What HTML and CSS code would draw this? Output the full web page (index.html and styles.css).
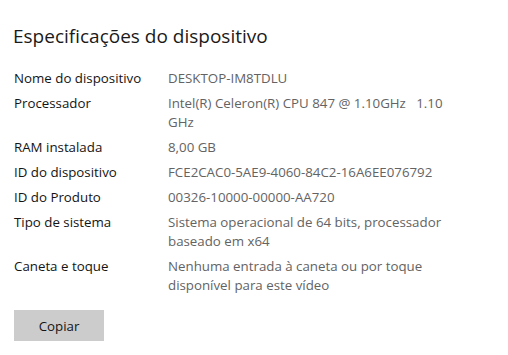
FILE: index.html
```html
<!DOCTYPE html>
<html lang="pt">
<head>
<meta charset="utf-8">
<link rel="stylesheet" href="styles.css">
</head>
<body>
<main class="panel">
  <h1 class="title">Especificações do dispositivo</h1>
  <dl class="specs">
    <div class="row"><dt>Nome do dispositivo</dt><dd>DESKTOP-IM8TDLU</dd></div>
    <div class="row"><dt>Processador</dt><dd>Intel(R) Celeron(R) CPU 847 @ 1.10GHz&nbsp;&nbsp; 1.10 GHz</dd></div>
    <div class="row"><dt>RAM instalada</dt><dd>8,00 GB</dd></div>
    <div class="row"><dt>ID do dispositivo</dt><dd>FCE2CAC0-5AE9-4060-84C2-16A6EE076792</dd></div>
    <div class="row"><dt>ID do Produto</dt><dd>00326-10000-00000-AA720</dd></div>
    <div class="row"><dt>Tipo de sistema</dt><dd>Sistema operacional de 64 bits, processador baseado em x64</dd></div>
    <div class="row"><dt>Caneta e toque</dt><dd>Nenhuma entrada à caneta ou por toque disponível para este vídeo</dd></div>
  </dl>
  <button class="copy">Copiar</button>
</main>
</body>
</html>
```
FILE: styles.css
```css
html, body {
  margin: 0;
  padding: 0;
  background: #ffffff;
}
body {
  font-family: "Open Sans", "Noto Sans", sans-serif;
  color: #1a1a1a;
}
.panel {
  padding: 22px 0 0 14px;
}
.title {
  margin: 0 0 0 -1px;
  font-size: 19px;
  font-weight: 400;
  line-height: 28px;
  color: #1a1a1a;
}
.specs {
  margin: 19px 0 0 0;
  display: flex;
  flex-direction: column;
  gap: 6px;
  font-size: 13.3px;
  line-height: 19px;
}
.row {
  display: grid;
  grid-template-columns: 154px 278px;
}
.row dt { margin: 0; color: #141414; }
.row dd { margin: 0; color: #636363; }
.copy {
  display: block;
  margin-top: 15px;
  width: 90px;
  height: 31px;
  border: none;
  background: #cccccc;
  font-family: inherit;
  font-size: 13.3px;
  color: #141414;
  padding: 0;
}
```
